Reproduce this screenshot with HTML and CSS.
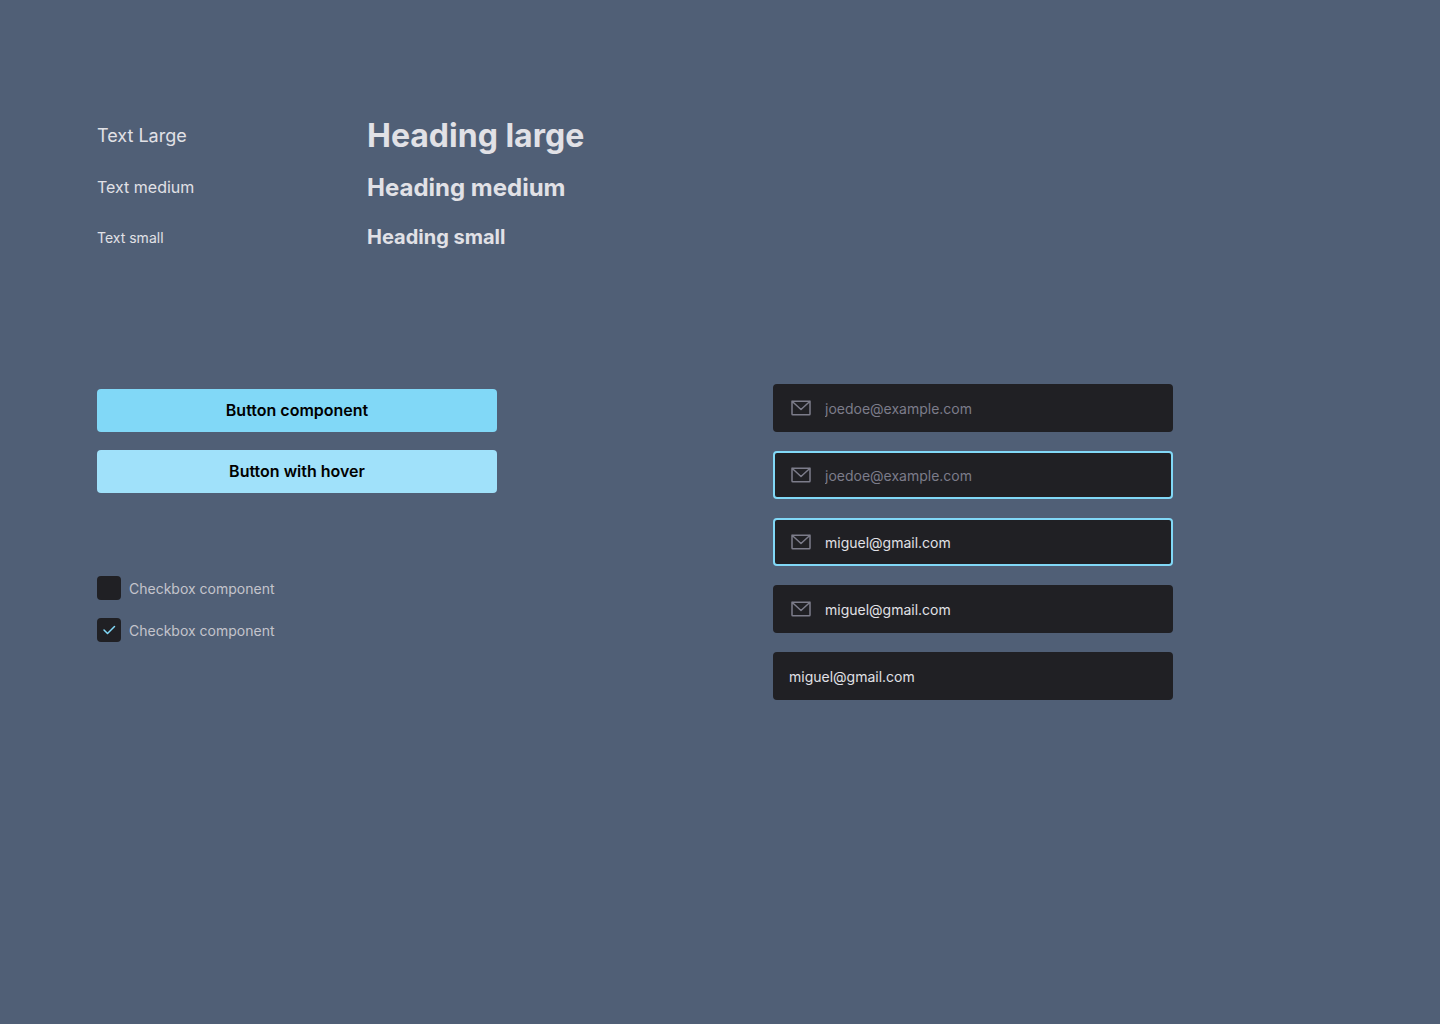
FILE: index.html
```html
<!DOCTYPE html>
<html lang="en">
<head>
<meta charset="utf-8">
<meta name="viewport" content="width=device-width, initial-scale=1">
<title>Components</title>
<link rel="stylesheet" href="styles.css">
</head>
<body>
<svg class="sprite" aria-hidden="true">
  <symbol id="envelope" viewBox="0 0 256 256">
    <path d="M32 56H224V192a8 8 0 0 1-8 8H40a8 8 0 0 1-8-8ZM224 56L128 144L32 56" fill="none" stroke="currentColor" stroke-width="16" stroke-linecap="round" stroke-linejoin="round"/>
  </symbol>
</svg>
<main class="page">
  <section class="typography">
    <div class="type-list">
      <p class="text text-lg">Text Large</p>
      <p class="text text-md">Text medium</p>
      <p class="text text-sm">Text small</p>
    </div>
    <div class="type-list">
      <h1 class="heading heading-lg">Heading large</h1>
      <h2 class="heading heading-md">Heading medium</h2>
      <h3 class="heading heading-sm">Heading small</h3>
    </div>
  </section>
  <section class="components">
    <div class="actions">
      <div class="buttons">
        <button class="button" type="button">Button component</button>
        <button class="button button-hover" type="button">Button with hover</button>
      </div>
      <div class="checks">
        <label class="check"><input class="check-box" type="checkbox"><span class="check-text">Checkbox component</span></label>
        <label class="check"><input class="check-box" type="checkbox" checked><span class="check-text">Checkbox component</span></label>
      </div>
    </div>
    <div class="fields">
      <label class="field"><svg class="field-icon" aria-hidden="true"><use href="#envelope"/></svg><input class="field-input" type="email" aria-label="E-mail" placeholder="joedoe@example.com"></label>
      <label class="field field-focus"><svg class="field-icon" aria-hidden="true"><use href="#envelope"/></svg><input class="field-input" type="email" aria-label="E-mail, focused" placeholder="joedoe@example.com"></label>
      <label class="field field-focus"><svg class="field-icon" aria-hidden="true"><use href="#envelope"/></svg><input class="field-input" type="email" aria-label="E-mail, focused and filled" value="miguel@gmail.com"></label>
      <label class="field"><svg class="field-icon" aria-hidden="true"><use href="#envelope"/></svg><input class="field-input" type="email" aria-label="E-mail, filled" value="miguel@gmail.com"></label>
      <label class="field"><input class="field-input" type="email" aria-label="E-mail without icon" value="miguel@gmail.com"></label>
    </div>
  </section>
</main>
</body>
</html>
```
FILE: styles.css
```css
* {
  box-sizing: border-box;
}

body {
  margin: 0;
  min-height: 100vh;
  background: #505f76;
  color: #e1e1e6;
  font-family: Inter, sans-serif;
}

.sprite {
  display: none;
}

.page {
  padding: 111px 97px;
}

.typography {
  display: grid;
  grid-template-columns: 270px 1fr;
}

.type-list {
  display: grid;
  grid-template-rows: 48px 56px 44px;
  align-items: center;
}

.text,
.heading {
  margin: 0;
}

.text {
  font-weight: 400;
}

.text-lg { font-size: 18px; }
.text-md { font-size: 16px; }
.text-sm { font-size: 14px; }

.heading {
  font-weight: 700;
}

.heading-lg { font-size: 32px; }
.heading-md { font-size: 24px; }
.heading-sm { font-size: 20px; }

.components {
  display: grid;
  grid-template-columns: minmax(0, 400px) minmax(0, 400px);
  column-gap: 276px;
  margin-top: 125px;
}

.buttons,
.checks,
.fields {
  display: flex;
  flex-direction: column;
}

.buttons {
  gap: 18px;
  padding-top: 5px;
}

.button {
  padding: 12px 16px;
  border: 0;
  border-radius: 4px;
  background: #81d8f7;
  color: #000;
  font: 600 16px/19px Inter, sans-serif;
  cursor: pointer;
}

.button:hover,
.button-hover {
  background: #a0e1fa;
}

.checks {
  align-items: flex-start;
  gap: 18px;
  margin-top: 83px;
}

.check {
  display: flex;
  align-items: center;
  gap: 8px;
  color: #c4c4cc;
  font-size: 14px;
}

.check-text {
  padding-top: 2px;
  line-height: 20px;
}

.check-box {
  appearance: none;
  width: 24px;
  height: 24px;
  margin: 0;
  border-radius: 4px;
  background: #202024;
}

.check-box:checked {
  background: #202024 url("data:image/svg+xml,%3Csvg xmlns='http://www.w3.org/2000/svg' viewBox='0 0 256 256' fill='none' stroke='%2381d8f7' stroke-width='24' stroke-linecap='round' stroke-linejoin='round'%3E%3Cpath d='M216 72L104 184L48 128'/%3E%3C/svg%3E") center / 16px no-repeat;
}

.fields {
  gap: 19px;
}

.field {
  display: flex;
  align-items: center;
  gap: 12px;
  height: 48px;
  padding: 0 14px;
  border: 2px solid #202024;
  border-radius: 4px;
  background: #202024;
}

.field-focus,
.field:focus-within {
  border-color: #81d8f7;
}

.field-icon {
  flex: none;
  width: 24px;
  height: 24px;
  color: #7c7c8a;
}

.field-input {
  flex: 1;
  min-width: 0;
  padding: 2px 0 0;
  border: 0;
  outline: 0;
  background: none;
  color: #e1e1e6;
  font: 400 14px/20px Inter, sans-serif;
}

.field-input::placeholder {
  color: #7c7c8a;
  opacity: 1;
}
```
